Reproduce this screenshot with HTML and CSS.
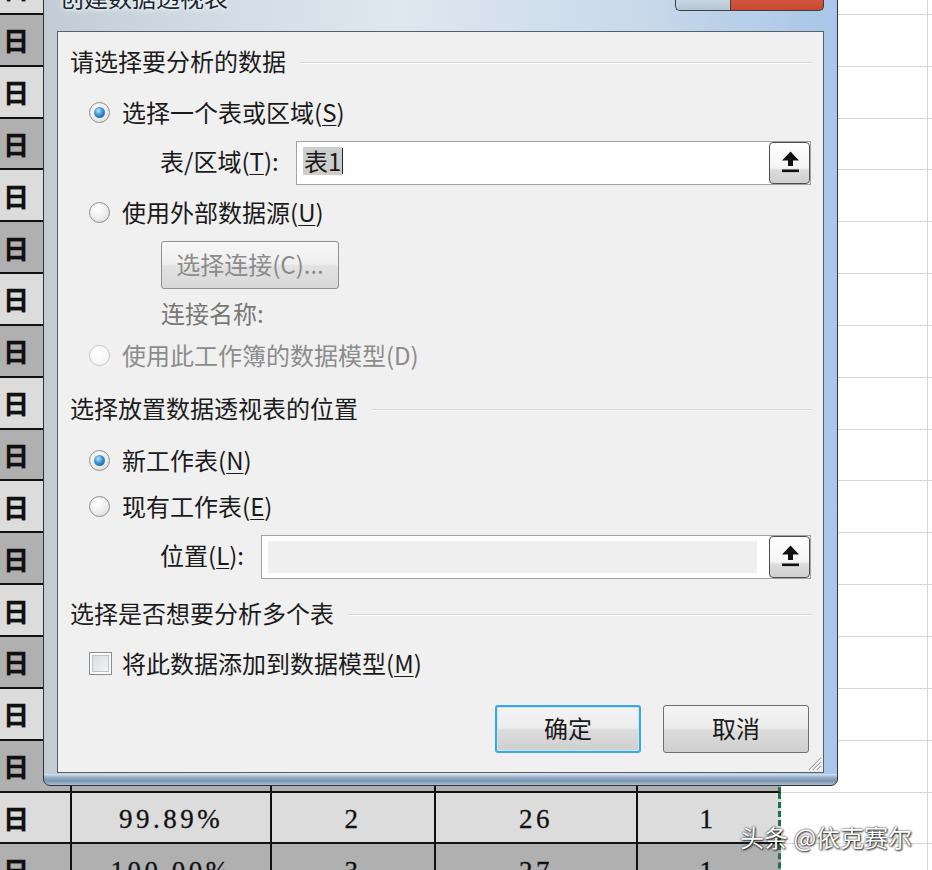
FILE: index.html
```html
<!DOCTYPE html>
<html>
<head>
    <title>创建数据透视表</title>
    <link rel="stylesheet" href="styles.css">
</head>
<body>
    <div class="sheet">
        <div class="row light"><div class="c c0">日</div><div class="c c1"></div><div class="c c2"></div><div class="c c3"></div><div class="c c4"></div><div class="g g5"></div><div class="g g6"></div></div>
        <div class="row dark"><div class="c c0">日</div><div class="c c1"></div><div class="c c2"></div><div class="c c3"></div><div class="c c4"></div><div class="g g5"></div><div class="g g6"></div></div>
        <div class="row light"><div class="c c0">日</div><div class="c c1"></div><div class="c c2"></div><div class="c c3"></div><div class="c c4"></div><div class="g g5"></div><div class="g g6"></div></div>
        <div class="row dark"><div class="c c0">日</div><div class="c c1"></div><div class="c c2"></div><div class="c c3"></div><div class="c c4"></div><div class="g g5"></div><div class="g g6"></div></div>
        <div class="row light"><div class="c c0">日</div><div class="c c1"></div><div class="c c2"></div><div class="c c3"></div><div class="c c4"></div><div class="g g5"></div><div class="g g6"></div></div>
        <div class="row dark"><div class="c c0">日</div><div class="c c1"></div><div class="c c2"></div><div class="c c3"></div><div class="c c4"></div><div class="g g5"></div><div class="g g6"></div></div>
        <div class="row light"><div class="c c0">日</div><div class="c c1"></div><div class="c c2"></div><div class="c c3"></div><div class="c c4"></div><div class="g g5"></div><div class="g g6"></div></div>
        <div class="row dark"><div class="c c0">日</div><div class="c c1"></div><div class="c c2"></div><div class="c c3"></div><div class="c c4"></div><div class="g g5"></div><div class="g g6"></div></div>
        <div class="row light"><div class="c c0">日</div><div class="c c1"></div><div class="c c2"></div><div class="c c3"></div><div class="c c4"></div><div class="g g5"></div><div class="g g6"></div></div>
        <div class="row dark"><div class="c c0">日</div><div class="c c1"></div><div class="c c2"></div><div class="c c3"></div><div class="c c4"></div><div class="g g5"></div><div class="g g6"></div></div>
        <div class="row light"><div class="c c0">日</div><div class="c c1"></div><div class="c c2"></div><div class="c c3"></div><div class="c c4"></div><div class="g g5"></div><div class="g g6"></div></div>
        <div class="row dark"><div class="c c0">日</div><div class="c c1"></div><div class="c c2"></div><div class="c c3"></div><div class="c c4"></div><div class="g g5"></div><div class="g g6"></div></div>
        <div class="row light"><div class="c c0">日</div><div class="c c1"></div><div class="c c2"></div><div class="c c3"></div><div class="c c4"></div><div class="g g5"></div><div class="g g6"></div></div>
        <div class="row dark"><div class="c c0">日</div><div class="c c1"></div><div class="c c2"></div><div class="c c3"></div><div class="c c4"></div><div class="g g5"></div><div class="g g6"></div></div>
        <div class="row light"><div class="c c0">日</div><div class="c c1"></div><div class="c c2"></div><div class="c c3"></div><div class="c c4"></div><div class="g g5"></div><div class="g g6"></div></div>
        <div class="row dark"><div class="c c0">日</div><div class="c c1"></div><div class="c c2"></div><div class="c c3"></div><div class="c c4"></div><div class="g g5"></div><div class="g g6"></div></div>
        <div class="row light"><div class="c c0">日</div><div class="c c1">99.89%</div><div class="c c2">2</div><div class="c c3">26</div><div class="c c4">1</div><div class="g g5"></div><div class="g g6"></div></div>
        <div class="row dark"><div class="c c0">日</div><div class="c c1">100.00%</div><div class="c c2">3</div><div class="c c3">27</div><div class="c c4">1</div><div class="g g5"></div><div class="g g6"></div></div>
    </div>

    <div class="dialog">
        <div class="titlebar">
            <span class="title">创建数据透视表</span>
            <div class="caption">
                <span class="cap help"></span>
                <span class="cap close"></span>
            </div>
        </div>
        <div class="client">
            <div class="head h1"><span>请选择要分析的数据</span><i class="rule"></i></div>
            <div class="opt o1"><span class="radio on"></span>选择一个表或区域(<u>S</u>)</div>
            <div class="field f1">
                <span class="lbl lbl-t">表/区域(<u>T</u>):</span>
                <div class="refedit">
                    <div class="val"><span class="sel">表1</span><i class="caret"></i></div>
                    <div class="refbtn">
                        <svg width="38" height="38" viewBox="0 0 38 38"><path d="M19.5 7.5 L28 16.5 L22 16.5 L22 22 L17 22 L17 16.5 L11 16.5 Z" fill="#111"/><rect x="11" y="25.5" width="17" height="2.6" fill="#111"/></svg>
                    </div>
                </div>
            </div>
            <div class="opt o2"><span class="radio"></span>使用外部数据源(<u>U</u>)</div>
            <div class="pick"><span class="btn btn-off">选择连接(C)...</span></div>
            <div class="conn">连接名称:</div>
            <div class="opt o3 off"><span class="radio"></span>使用此工作簿的数据模型(D)</div>
            <div class="head h2"><span>选择放置数据透视表的位置</span><i class="rule"></i></div>
            <div class="opt o4"><span class="radio on"></span>新工作表(<u>N</u>)</div>
            <div class="opt o5"><span class="radio"></span>现有工作表(<u>E</u>)</div>
            <div class="field f2">
                <span class="lbl lbl-l">位置(<u>L</u>):</span>
                <div class="refedit off">
                    <div class="val"></div>
                    <div class="refbtn">
                        <svg width="38" height="38" viewBox="0 0 38 38"><path d="M19.5 7.5 L28 16.5 L22 16.5 L22 22 L17 22 L17 16.5 L11 16.5 Z" fill="#111"/><rect x="11" y="25.5" width="17" height="2.6" fill="#111"/></svg>
                    </div>
                </div>
            </div>
            <div class="head h3"><span>选择是否想要分析多个表</span><i class="rule"></i></div>
            <div class="opt o6"><span class="check"></span>将此数据添加到数据模型(<u>M</u>)</div>
            <div class="actions">
                <span class="btn btn-default">确定</span>
                <span class="btn">取消</span>
            </div>
            <svg class="grip" width="16" height="16" viewBox="0 0 16 16">
                <path d="M15 3 L3 15 M15 7 L7 15 M15 11 L11 15" stroke="#a9a9a9" stroke-width="1.4"/>
                <path d="M15 4 L4 15 M15 8 L8 15 M15 12 L12 15" stroke="#ffffff" stroke-width="1"/>
            </svg>
        </div>
    </div>

    <div class="mark">头条 @依克赛尔</div>
</body>
</html>
```

FILE: styles.css
```css
body {
    margin: 0;
    height: 870px;
    overflow: hidden;
    position: relative;
    background-color: white;
    font-family: "Noto Sans CJK SC", sans-serif;
}

/* spreadsheet behind the dialog */
.sheet {
    margin-top: -37px;
}
.row {
    display: flex;
    height: 51.85px;
}
.c {
    box-sizing: border-box;
    flex: none;
    display: flex;
    align-items: center;
    justify-content: center;
    padding-top: 4px;
    border-bottom: 2px solid #111;
    border-right: 2px solid #111;
    font-family: "Liberation Serif", serif;
    font-size: 27px;
    letter-spacing: 3.5px;
    color: #111;
    -webkit-text-stroke: 0.3px #111;
}
.row.light .c {
    background-color: #dcdcdc;
}
.row.dark .c {
    background-color: #b0b0b0;
}
.c0 {
    width: 72px;
    justify-content: flex-start;
    padding-top: 0;
    padding-left: 3px;
    font-family: "Noto Sans CJK SC", sans-serif;
    font-weight: 700;
    font-size: 26px;
    letter-spacing: 0;
}
.c1 { width: 200px; }
.c2 { width: 164px; }
.c3 { width: 202px; }
.c4 {
    width: 143px;
    border-right: 3px dashed #1f7148 !important;
}
.g {
    box-sizing: border-box;
    background-color: white;
    border-bottom: 1px solid #d6d6d6;
}
.g5 {
    width: 147px;
    flex: none;
    border-right: 1px solid #d6d6d6;
}
.g6 {
    flex: 1;
}

/* dialog window */
.dialog {
    position: absolute;
    left: 43px;
    top: -16px;
    width: 795px;
    height: 802px;
    box-sizing: border-box;
    border: 1px solid #2b333d;
    border-radius: 0 0 7px 7px;
    padding: 0 13px 12px 13px;
    display: flex;
    flex-direction: column;
    background:
        linear-gradient(to bottom, transparent calc(100% - 11px), #dae5f0 calc(100% - 11px), #9ab1c9 calc(100% - 8px), #7c95b0 calc(100% - 4px), #aebfd2 100%),
        linear-gradient(to right, #c2ccd7 0%, #d4dee8 25%, #dfe7f0 45%, #c9d9ea 75%, #a8c6e8 100%);
}
.titlebar {
    height: 46px;
    flex: none;
    position: relative;
}
.title {
    position: absolute;
    left: 3px;
    top: 0;
    font-size: 24px;
    line-height: 24px;
    color: #1b2633;
    text-shadow: 0 0 6px #fff, 0 0 3px #fff;
}
.caption {
    position: absolute;
    right: 0;
    top: -1px;
    display: flex;
}
.cap {
    height: 27px;
    box-sizing: border-box;
    border: 1px solid #3a3f46;
    border-top: none;
}
.help {
    width: 55px;
    border-radius: 0 0 0 5px;
    border-right: none;
    background: linear-gradient(#e4ebf2, #b7c5d4);
}
.close {
    width: 94px;
    border-radius: 0 0 5px 0;
    background: linear-gradient(#eba793, #d2583f 60%, #c9472f);
}

.client {
    flex: 1;
    position: relative;
    border: 1px solid #56606b;
    background-color: #f0f0f0;
    padding: 0 12px;
    display: flex;
    flex-direction: column;
    font-size: 24px;
    color: #1a1a1a;
}
.client u {
    text-decoration-thickness: 1px;
    text-underline-offset: 3px;
}

.head {
    display: flex;
    align-items: center;
    height: 32px;
    box-sizing: border-box;
    padding-bottom: 5px;
    color: #1c1c1c;
}
.head .rule {
    flex: 1;
    height: 1px;
    background-color: #d6dadd;
    box-shadow: 0 1px 0 #fbfbfb;
    margin-left: 14px;
    margin-top: 3px;
}
.h1 { margin-top: 15px; }
.h2 { margin-top: 21px; }
.h3 { margin-top: 20px; }

.opt {
    display: flex;
    align-items: center;
    height: 32px;
    box-sizing: border-box;
    padding-left: 19px;
    padding-bottom: 5px;
}
.o1 { margin-top: 19px; }
.o2 { margin-top: 13px; }
.o3 { margin-top: 12px; }
.o4 { margin-top: 20px; }
.o5 { margin-top: 14px; }
.o6 { margin-top: 18px; }
.opt.off {
    color: #8c8c8c;
}

.radio {
    position: relative;
    width: 21px;
    height: 21px;
    box-sizing: border-box;
    margin-right: 12px;
    margin-top: 1px;
    border-radius: 50%;
    border: 1px solid #8b8e92;
    background: radial-gradient(circle at 40% 35%, #ffffff 0%, #ececec 55%, #cfd1d4 100%);
}
.radio.on::after {
    content: "";
    position: absolute;
    left: 4px;
    top: 4px;
    width: 11px;
    height: 11px;
    border-radius: 50%;
    background: radial-gradient(circle at 40% 35%, #b6ecff 0%, #3b8fd0 45%, #0f4f8f 100%);
}
.opt.off .radio {
    border-color: #c6c8ca;
    background: radial-gradient(circle at 40% 35%, #ffffff, #f1f1f1);
}

.check {
    width: 23px;
    height: 23px;
    box-sizing: border-box;
    margin-right: 10px;
    margin-top: 1px;
    border: 1px solid #8a8c90;
    background: linear-gradient(135deg, #d6d8db, #f8f8f8);
    box-shadow: inset 0 0 0 2px #fbfbfb, inset 0 0 0 3px #bfc2c6;
}

.field {
    display: flex;
    align-items: center;
    height: 44px;
    padding-left: 90px;
}
.f1 { margin-top: 11px; }
.f2 { margin-top: 11px; }
.lbl {
    flex: none;
    padding-bottom: 6px;
}
.lbl-t { width: 136px; }
.lbl-l { width: 101px; }

.refedit {
    flex: 1;
    height: 44px;
    box-sizing: border-box;
    border: 1px solid #9fa4aa;
    background-color: white;
    display: flex;
    align-items: center;
}
.refedit .val {
    flex: 1;
    align-self: stretch;
    display: flex;
    align-items: center;
    padding-left: 6px;
    padding-bottom: 4px;
}
.sel {
    background-color: #cdcdcd;
    line-height: 28px;
    padding: 0 1px;
}
.caret {
    width: 1px;
    height: 26px;
    background-color: #222;
}
.refedit.off .val {
    margin: 5px 12px 5px 6px;
    padding: 0;
    background-color: #efefef;
}
.refbtn {
    width: 41px;
    height: 42px;
    box-sizing: border-box;
    flex: none;
    display: flex;
    align-items: center;
    justify-content: center;
    border: 1.5px solid #4d4d4d;
    border-radius: 4px;
    background: linear-gradient(#ffffff 0%, #f4f4f4 62%, #dcdcdc 68%, #cfcfcf 100%);
}

.pick {
    margin-top: 11px;
    padding-left: 91px;
    display: flex;
}
.conn {
    margin-top: 12px;
    height: 28px;
    line-height: 24px;
    padding-left: 91px;
    color: #787878;
}

.btn {
    width: 146px;
    height: 48px;
    box-sizing: border-box;
    display: flex;
    align-items: center;
    justify-content: center;
    padding-bottom: 4px;
    border: 1px solid #707070;
    border-radius: 3px;
    background: linear-gradient(#f4f4f4 0%, #ececec 48%, #dcdcdc 52%, #cfcfcf 100%);
    color: #1a1a1a;
}
.btn-off {
    width: 178px;
    color: #8b8b8b;
    border-color: #8f8f8f;
    background: linear-gradient(#f6f6f6 0%, #efefef 48%, #e2e2e2 52%, #d8d8d8 100%);
}
.btn-default {
    border: 2px solid #3ea6dc;
    box-shadow: inset 0 0 0 1px #bfe8fa;
}
.actions {
    margin-top: 24px;
    display: flex;
    justify-content: flex-end;
    gap: 22px;
    padding-right: 2px;
}
.grip {
    position: absolute;
    right: 1px;
    bottom: 1px;
}

.mark {
    position: absolute;
    left: 740px;
    top: 819px;
    font-size: 24px;
    color: white;
    text-shadow: 0 0 2px #000, 1px 1px 2px rgba(0, 0, 0, 0.8);
}
```
